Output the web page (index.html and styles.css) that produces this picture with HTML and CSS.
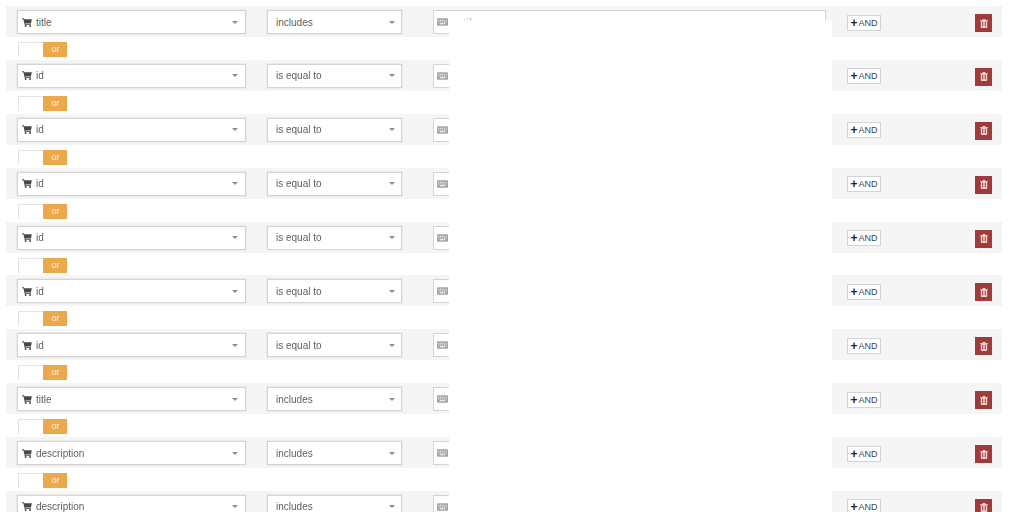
FILE: index.html
```html
<!DOCTYPE html>
<html>
<head>
    <title>Query Builder</title>
    <link rel="stylesheet" href="styles.css">
</head>
<body>
    <svg class="defs" width="0" height="0">
        <symbol id="cart" viewBox="0 0 13 12">
            <path d="M0 .4h2.5l.4 1.4h10l-1.1 5.4H4.3l.2 1h7.3v1.1H3.5L1.7 1.5H0z"/>
            <circle cx="4.7" cy="10.6" r="1.3"/>
            <circle cx="10.5" cy="10.6" r="1.3"/>
        </symbol>
        <symbol id="keyboard" viewBox="0 0 12 8">
            <path fill-rule="evenodd" d="M.8 0h10.4c.4 0 .8.4.8.8v6.4c0 .4-.4.8-.8.8H.8C.4 8 0 7.6 0 7.2V.8C0 .4.4 0 .8 0zM1.5 1.6v1h1v-1zM3.3 1.6v1h1v-1zM5.1 1.6v1h1v-1zM6.9 1.6v1h1v-1zM9.5 1.6v1h1v-1zM1.5 3.5v1h1v-1zM3.6 3.5v1h1v-1zM5.6 3.5v1h1v-1zM7.6 3.5v1h1v-1zM9.5 3.5v1h1v-1zM3 5.4v1h6v-1z"/>
        </symbol>
        <symbol id="trash" viewBox="0 0 10 11">
            <path fill-rule="evenodd" d="M3.5 0h3l.6 1.3H10v1H9v7.5c0 .6-.5 1.2-1.1 1.2H2.1C1.5 11 1 10.4 1 9.8V2.3H0v-1h2.9zM2.8 3.2v6h1.2v-6zM6 3.2v6h1.2v-6z"/>
        </symbol>
    </svg>

    <div class="rules">
        <div class="rule">
            <div class="select field-select"><svg class="cart"><use href="#cart"/></svg><span class="grow">title</span><i class="caret"></i></div>
            <div class="select op-select"><span class="grow">includes</span><i class="caret"></i></div>
            <div class="value"><svg class="kbd"><use href="#keyboard"/></svg><span class="value-text">antilopes</span></div>
            <a class="and-btn"><b>+</b>AND</a>
            <a class="del-btn"><svg class="bin"><use href="#trash"/></svg></a>
        </div>
        <div class="join"><div class="toggle"><span class="off"></span><span class="on">or</span></div></div>

        <div class="rule">
            <div class="select field-select"><svg class="cart"><use href="#cart"/></svg><span class="grow">id</span><i class="caret"></i></div>
            <div class="select op-select"><span class="grow">is equal to</span><i class="caret"></i></div>
            <div class="value"><svg class="kbd"><use href="#keyboard"/></svg></div>
            <a class="and-btn"><b>+</b>AND</a>
            <a class="del-btn"><svg class="bin"><use href="#trash"/></svg></a>
        </div>
        <div class="join"><div class="toggle"><span class="off"></span><span class="on">or</span></div></div>

        <div class="rule">
            <div class="select field-select"><svg class="cart"><use href="#cart"/></svg><span class="grow">id</span><i class="caret"></i></div>
            <div class="select op-select"><span class="grow">is equal to</span><i class="caret"></i></div>
            <div class="value"><svg class="kbd"><use href="#keyboard"/></svg></div>
            <a class="and-btn"><b>+</b>AND</a>
            <a class="del-btn"><svg class="bin"><use href="#trash"/></svg></a>
        </div>
        <div class="join"><div class="toggle"><span class="off"></span><span class="on">or</span></div></div>

        <div class="rule">
            <div class="select field-select"><svg class="cart"><use href="#cart"/></svg><span class="grow">id</span><i class="caret"></i></div>
            <div class="select op-select"><span class="grow">is equal to</span><i class="caret"></i></div>
            <div class="value"><svg class="kbd"><use href="#keyboard"/></svg></div>
            <a class="and-btn"><b>+</b>AND</a>
            <a class="del-btn"><svg class="bin"><use href="#trash"/></svg></a>
        </div>
        <div class="join"><div class="toggle"><span class="off"></span><span class="on">or</span></div></div>

        <div class="rule">
            <div class="select field-select"><svg class="cart"><use href="#cart"/></svg><span class="grow">id</span><i class="caret"></i></div>
            <div class="select op-select"><span class="grow">is equal to</span><i class="caret"></i></div>
            <div class="value"><svg class="kbd"><use href="#keyboard"/></svg></div>
            <a class="and-btn"><b>+</b>AND</a>
            <a class="del-btn"><svg class="bin"><use href="#trash"/></svg></a>
        </div>
        <div class="join"><div class="toggle"><span class="off"></span><span class="on">or</span></div></div>

        <div class="rule">
            <div class="select field-select"><svg class="cart"><use href="#cart"/></svg><span class="grow">id</span><i class="caret"></i></div>
            <div class="select op-select"><span class="grow">is equal to</span><i class="caret"></i></div>
            <div class="value"><svg class="kbd"><use href="#keyboard"/></svg></div>
            <a class="and-btn"><b>+</b>AND</a>
            <a class="del-btn"><svg class="bin"><use href="#trash"/></svg></a>
        </div>
        <div class="join"><div class="toggle"><span class="off"></span><span class="on">or</span></div></div>

        <div class="rule">
            <div class="select field-select"><svg class="cart"><use href="#cart"/></svg><span class="grow">id</span><i class="caret"></i></div>
            <div class="select op-select"><span class="grow">is equal to</span><i class="caret"></i></div>
            <div class="value"><svg class="kbd"><use href="#keyboard"/></svg></div>
            <a class="and-btn"><b>+</b>AND</a>
            <a class="del-btn"><svg class="bin"><use href="#trash"/></svg></a>
        </div>
        <div class="join"><div class="toggle"><span class="off"></span><span class="on">or</span></div></div>

        <div class="rule">
            <div class="select field-select"><svg class="cart"><use href="#cart"/></svg><span class="grow">title</span><i class="caret"></i></div>
            <div class="select op-select"><span class="grow">includes</span><i class="caret"></i></div>
            <div class="value"><svg class="kbd"><use href="#keyboard"/></svg></div>
            <a class="and-btn"><b>+</b>AND</a>
            <a class="del-btn"><svg class="bin"><use href="#trash"/></svg></a>
        </div>
        <div class="join"><div class="toggle"><span class="off"></span><span class="on">or</span></div></div>

        <div class="rule">
            <div class="select field-select"><svg class="cart"><use href="#cart"/></svg><span class="grow">description</span><i class="caret"></i></div>
            <div class="select op-select"><span class="grow">includes</span><i class="caret"></i></div>
            <div class="value"><svg class="kbd"><use href="#keyboard"/></svg></div>
            <a class="and-btn"><b>+</b>AND</a>
            <a class="del-btn"><svg class="bin"><use href="#trash"/></svg></a>
        </div>
        <div class="join"><div class="toggle"><span class="off"></span><span class="on">or</span></div></div>

        <div class="rule">
            <div class="select field-select"><svg class="cart"><use href="#cart"/></svg><span class="grow">description</span><i class="caret"></i></div>
            <div class="select op-select"><span class="grow">includes</span><i class="caret"></i></div>
            <div class="value"><svg class="kbd"><use href="#keyboard"/></svg></div>
            <a class="and-btn"><b>+</b>AND</a>
            <a class="del-btn"><svg class="bin"><use href="#trash"/></svg></a>
        </div>
    </div>

    <div class="cover"></div>
</body>
</html>
```

FILE: styles.css
```css
html, body {
    height: 100%;
    overflow: hidden;
}

body {
    margin: 0;
    background-color: #fff;
    font-family: 'Liberation Sans', Arial, sans-serif;
    font-size: 10px;
    color: #606060;
}

.defs {
    position: absolute;
}

.rules {
    padding: 6px 22px 0 6px;
    filter: blur(0.5px);
}

.rule {
    display: flex;
    align-items: center;
    box-sizing: border-box;
    height: 31px;
    padding: 1px 10px 0 11px;
    background-color: #f5f5f5;
}

.select {
    display: flex;
    align-items: center;
    box-sizing: border-box;
    height: 24px;
    background-color: #fff;
    border: 1px solid #d4d4d4;
    box-shadow: 0 0 0 0.5px #e2e2e2;
}

.field-select {
    width: 229px;
    padding: 0 7px 0 4px;
}

.op-select {
    width: 135px;
    margin-left: 21px;
    padding: 0 6px 0 8px;
}

.grow {
    flex: 1;
}

.cart {
    width: 10px;
    height: 9px;
    margin-right: 4px;
    fill: #484848;
}

.caret {
    width: 0;
    height: 0;
    border-left: 3px solid transparent;
    border-right: 3px solid transparent;
    border-top: 3px solid #8c8c8c;
}

.value {
    display: flex;
    align-items: flex-start;
    box-sizing: border-box;
    width: 393px;
    height: 24px;
    margin-left: 31px;
    padding: 7px 0 0 3px;
    background-color: #fff;
    border: 1px solid #d4d4d4;
}

.kbd {
    width: 11px;
    height: 8px;
    fill: #a4a4a4;
    flex: none;
}

.value-text {
    margin-left: 3px;
    margin-top: -1px;
    font-size: 9px;
    line-height: 10px;
    letter-spacing: 1px;
    color: #888;
}

.and-btn {
    display: flex;
    align-items: center;
    justify-content: center;
    box-sizing: border-box;
    width: 34px;
    height: 16px;
    margin-top: 1px;
    margin-left: 21px;
    background-color: #fff;
    border: 1px solid #d4d4d4;
    font-size: 9px;
    color: #444;
}

.and-btn b {
    margin-right: 1px;
    font-size: 12px;
    line-height: 12px;
    color: #222;
}

.del-btn {
    display: flex;
    align-items: center;
    justify-content: center;
    width: 17px;
    height: 18px;
    margin-top: 2px;
    margin-left: auto;
    background-color: #9e3c3c;
}

.bin {
    width: 8px;
    height: 9px;
    fill: #f2cfcf;
}

.join {
    height: 22.89px;
    padding: 5px 0 0 12px;
    box-sizing: border-box;
}

.toggle {
    display: flex;
    width: 49px;
    height: 15px;
}

.off {
    width: 25px;
    box-sizing: border-box;
    background-color: #fff;
    border-left: 1px solid #e4e4e4;
    border-top: 1px solid #e4e4e4;
}

.on {
    flex: 1;
    padding-left: 1px;
    text-align: center;
    background-color: #eca94c;
    font-size: 9px;
    line-height: 15px;
    color: #fbeed8;
}

/* blank patch lying over the value column */
.cover {
    position: absolute;
    left: 449px;
    top: 20px;
    width: 383px;
    bottom: 0;
    background-color: #fff;
}
```
